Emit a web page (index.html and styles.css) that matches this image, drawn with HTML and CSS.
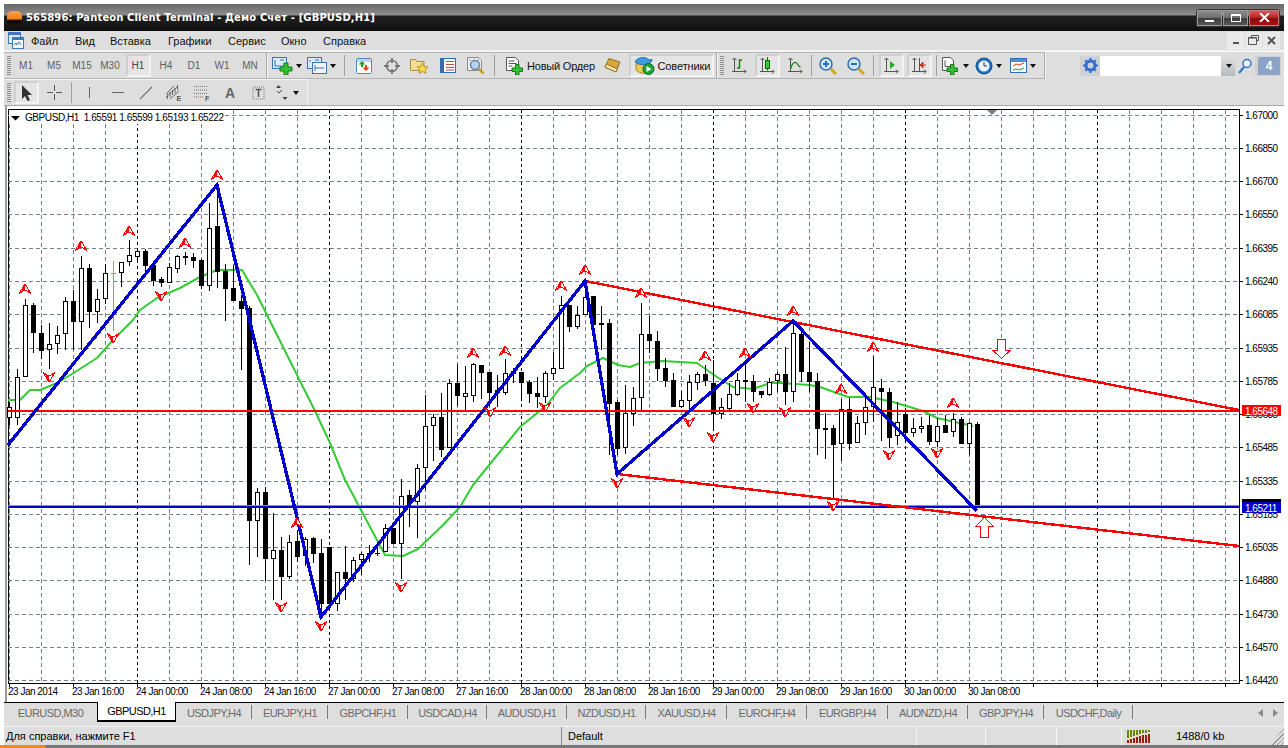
FILE: index.html
```html
<!DOCTYPE html>
<html lang="ru">
<head>
<meta charset="utf-8">
<title>565896: Panteon Client Terminal</title>
<link rel="stylesheet" href="styles.css">
</head>
<body>
<div class="window">
  <header class="titlebar">
    <span class="logo"></span>
    <span class="title-text">565896: Panteon Client Terminal - Демо Счет - [GBPUSD,H1]</span>
    <div class="winbtns">
      <span class="winbtn"><i class="glyph-min"></i></span>
      <span class="winbtn"><i class="glyph-max"></i></span>
      <span class="winbtn close">
        <svg width="11" height="9" viewBox="0 0 11 9"><path d="M1 0L10 9M10 0L1 9" stroke="#fff" stroke-width="2"/></svg>
      </span>
    </div>
  </header>

  <nav class="menubar">
    <svg class="appicon" width="16" height="17" viewBox="0 0 16 17"><rect x=".5" y=".5" width="12" height="11" fill="#dbe9f8" stroke="#3f77bf"/><rect x="4.5" y="5.5" width="11" height="11" fill="#f4f8fd" stroke="#3f77bf"/><path d="M1 2h11M5 7h10" stroke="#3f77bf" stroke-width="2"/><path d="M6 13l2-2 1 2 2-3 2 3" fill="none" stroke="#3f77bf"/></svg>
    <span class="menu-item m1">Файл</span>
    <span class="menu-item m2">Вид</span>
    <span class="menu-item m3">Вставка</span>
    <span class="menu-item m4">Графики</span>
    <span class="menu-item m5">Сервис</span>
    <span class="menu-item m6">Окно</span>
    <span class="menu-item m7">Справка</span>
    <div class="docbtns">
      <span class="docbtn"><i class="doc-min"></i></span>
      <span class="docbtn"><svg width="11" height="10" viewBox="0 0 11 10"><path d="M3.5 2.5v-2h7v5h-2M.5 2.5h8v7h-8z" fill="none" stroke="#555"/><path d="M1 3h7" stroke="#555"/></svg></span>
      <span class="docbtn"><svg width="9" height="9" viewBox="0 0 9 9"><path d="M1 1l7 7M8 1l-7 7" stroke="#555" stroke-width="2"/></svg></span>
    </div>
  </nav>

  <div class="tbrow first">
    <div class="tbgroup g-periods">
      <span class="grip"></span>
      <span class="btn per">M1</span><span class="btn per">M5</span><span class="btn per">M15</span><span class="btn per">M30</span><span class="btn per sel">H1</span><span class="btn per">H4</span><span class="btn per">D1</span><span class="btn per">W1</span><span class="btn per">MN</span>
    </div>
    <div class="tbgroup g-main">
      <span class="btn w34">
        <svg width="21" height="18" viewBox="0 0 21 18"><rect x=".5" y=".5" width="14" height="11" fill="#dcebfb" stroke="#3a72b8"/><path d="M3 3v6M3 9h9M8 3h4" stroke="#3a72b8"/><path d="M8 10h4V6h4v4h4v4h-4v4h-4v-4H8z" fill="#35c135" stroke="#0c7d0c"/></svg><i class="caret"></i>
      </span>
      <span class="btn w35">
        <svg width="20" height="18" viewBox="0 0 20 18"><rect x=".5" y=".5" width="14" height="11" fill="#dcebfb" stroke="#3a72b8"/><rect x="5.5" y="5.5" width="14" height="11" fill="#eef5fd" stroke="#3a72b8"/><path d="M3 3v2M8 8v6M8 11h9M8 3h4" stroke="#3a72b8"/></svg><i class="caret"></i>
      </span>
      <span class="sep s11"></span>
      <span class="btn">
        <svg width="16" height="16" viewBox="0 0 16 16"><rect x=".5" y=".5" width="15" height="15" rx="1" fill="#fff" stroke="#4b86c6"/><path d="M1 1h14v3H1z" fill="#bcd7f2"/><path d="M6 3L2.5 6.5H5V9h2V6.5h2.500z" fill="#1aa51a"/><path d="M10 13l3.500-3.500H11V7H9v2.500H6.500z" fill="#e0431f"/></svg>
      </span>
      <span class="btn">
        <svg width="16" height="16" viewBox="0 0 16 16"><circle cx="8" cy="8" r="5.500" fill="none" stroke="#777" stroke-width="1.500"/><path d="M8 0v5M8 11v5M0 8h5M11 8h5" stroke="#666" stroke-width="1.500"/></svg>
      </span>
      <span class="btn">
        <svg width="19" height="17" viewBox="0 0 19 17"><path d="M.5 2.500h5l1.500 2h7v9H.5z" fill="#f6dc8c" stroke="#a88f3f"/><path d="M12.500 6l1.700 3.500 3.800.5-2.800 2.600.7 3.800-3.400-1.900-3.400 1.900.7-3.800L7 10l3.800-.5z" fill="#f8d94a" stroke="#b89420"/></svg>
      </span>
      <span class="btn">
        <svg width="16" height="15" viewBox="0 0 16 15"><rect x=".5" y=".5" width="15" height="14" fill="#fff" stroke="#2f6db2"/><path d="M1 1h3v13H1z" fill="#2f6db2"/><path d="M6 3.500h8M6 6.500h8M6 9.500h8M6 12h8" stroke="#c54a3a"/></svg>
      </span>
      <span class="btn">
        <svg width="18" height="18" viewBox="0 0 18 18"><path d="M.5.500h11l3 3v10H.5z" fill="#eef0f2" stroke="#8c8c8c"/><circle cx="8" cy="8" r="4.500" fill="#b6d4ee" stroke="#6d87a0" stroke-width="1.500"/><path d="M11.500 11.500l5 5" stroke="#c8a020" stroke-width="2.500"/><path d="M3 2v2M7 2v2M11 2v2" stroke="#888"/></svg>
      </span>
      <span class="sep s9"></span>
      <span class="btn neworder">
        <svg class="noicon" width="17" height="18" viewBox="0 0 17 18"><path d="M.5.500h9l3 3v10H.5z" fill="#fff" stroke="#555"/><path d="M2.500 4h6M2.500 6.500h8M2.500 9h4" stroke="#555"/><path d="M6 11h3.500V7.500h3.500V11H16.500v3.500H13V18H9.500v-3.500H6z" fill="#35c135" stroke="#0c7d0c"/></svg>
        <span class="btn-label">Новый Ордер</span>
      </span>
      <span class="btn wbook">
        <svg width="17" height="15" viewBox="0 0 17 15"><path d="M5 .5l11 3.500-4 9.500L1 9z" fill="#d9a83a" stroke="#8b6a1e"/><path d="M1.500 9.500l10.500 4.500 1.500-3L3.500 6.500" fill="#fbe6a6" stroke="#8b6a1e"/></svg>
      </span>
      <span class="btn experts sel">
        <svg width="21" height="19" viewBox="0 0 21 19"><path d="M2 8c5-1 10-1 13 0v8c-3 2-9 2-13-2z" fill="#ecc94e" stroke="#a88a20"/><path d="M1 6c2-5 11-6 14-2l3-.5c0 2-2 4-4 4.500-4 1-10 1-13-2z" fill="#3f9adf" stroke="#2a6fae"/><circle cx="14.500" cy="13" r="5.500" fill="#17a43a" stroke="#0c6d23"/><path d="M12.500 10l5 3-5 3z" fill="#fff"/></svg>
        <span class="btn-label">Советники</span>
      </span>
    </div>
    <div class="tbgroup g-chart">
      <span class="grip tall"></span>
      <span class="btn"><svg width="16" height="17" viewBox="0 0 16 17"><path d="M3.500 1v14M1 14.500h14M1.500 3l2-2 2 2M13 12.500l2 2-2 2" fill="none" stroke="#555"/><path d="M6 11h2.500V3H11" fill="none" stroke="#0a8a0a" stroke-width="1.500"/></svg></span>
      <span class="btn sel"><svg width="16" height="17" viewBox="0 0 16 17"><path d="M3.500 1v14M1 14.500h14M1.500 3l2-2 2 2M13 12.500l2 2-2 2" fill="none" stroke="#555"/><rect x="6.500" y="3.500" width="4" height="8" fill="#2ecc2e" stroke="#0a6a0a"/><path d="M8.500 0v3.500M8.500 11.500v2" stroke="#0a6a0a"/></svg></span>
      <span class="btn"><svg width="16" height="17" viewBox="0 0 16 17"><path d="M3.500 1v14M1 14.500h14M1.500 3l2-2 2 2M13 12.500l2 2-2 2" fill="none" stroke="#555"/><path d="M3.500 12c2-7 5-8 7-5 1 2 2 3 3 3" fill="none" stroke="#0a8a0a" stroke-width="1.300"/></svg></span>
      <span class="sep s5"></span>
      <span class="btn"><svg width="18" height="18" viewBox="0 0 18 18"><circle cx="7" cy="7" r="6" fill="#cfe6fa" stroke="#2f6db2" stroke-width="1.500"/><path d="M4 7h6M7 4v6" stroke="#2f6db2" stroke-width="2"/><path d="M11.500 11.500l5.500 5.500" stroke="#d3a820" stroke-width="3"/></svg></span>
      <span class="btn"><svg width="18" height="18" viewBox="0 0 18 18"><circle cx="7" cy="7" r="6" fill="#cfe6fa" stroke="#2f6db2" stroke-width="1.500"/><path d="M4 7h6" stroke="#2f6db2" stroke-width="2"/><path d="M11.500 11.500l5.500 5.500" stroke="#d3a820" stroke-width="3"/></svg></span>
      <span class="sep s7"></span>
      <span class="btn sel"><svg width="16" height="17" viewBox="0 0 16 17"><path d="M3.500 1v14M1 14.500h14M1.500 3l2-2 2 2M13 12.500l2 2-2 2" fill="none" stroke="#555"/><path d="M7 4l5 4-5 4z" fill="#1fae1f"/></svg></span>
      <span class="btn sel"><svg width="16" height="17" viewBox="0 0 16 17"><path d="M3.500 1v14M1 14.500h14M1.500 3l2-2 2 2M13 12.500l2 2-2 2M8.500 1v13" fill="none" stroke="#555"/><path d="M15 8h-3M12 5l-3 3 3 3z" fill="#c8381a" stroke="#c8381a"/></svg></span>
      <span class="sep s6"></span>
      <span class="btn w32">
        <svg width="18" height="18" viewBox="0 0 18 18"><path d="M.5.500h8l3 3v10H.5z" fill="#fff" stroke="#555"/><path d="M3 3.500v6M3 9.500h6" stroke="#555"/><path d="M5 11h3.500V7.500H12V11h3.500v3.500H12V18H8.500v-3.500H5z" fill="#35c135" stroke="#0c7d0c"/></svg><i class="caret"></i>
      </span>
      <span class="btn w34">
        <svg width="18" height="18" viewBox="0 0 18 18"><circle cx="9" cy="9" r="8" fill="#1f6fc4" stroke="#14508f"/><circle cx="9" cy="9" r="5.500" fill="#eef6fd"/><path d="M9 5v4h3" fill="none" stroke="#333"/></svg><i class="caret"></i>
      </span>
      <span class="btn w36">
        <svg width="17" height="15" viewBox="0 0 17 15"><rect x=".5" y=".5" width="16" height="14" fill="#f7fbff" stroke="#2f6db2"/><path d="M1 1h15v3H1z" fill="#4b8fd6"/><path d="M3 8l3-2 3 1 5-2" fill="none" stroke="#cc3a2a"/><path d="M3 12l3-1 3 1 5-2" fill="none" stroke="#1e9e1e"/></svg><i class="caret"></i>
      </span>
    </div>
    <div class="searchbox">
      <span class="gear"><svg width="15" height="15" viewBox="0 0 15 15"><circle cx="7.500" cy="7.500" r="4.500" fill="none" stroke="#2f6fd0" stroke-width="3"/><path d="M7.500 0v3M7.500 12v3M0 7.500h3M12 7.500h3M2.200 2.200l2 2M10.800 10.800l2 2M2.200 12.800l2-2M10.800 4.200l2-2" stroke="#2f6fd0" stroke-width="2"/></svg></span>
      <span class="search-input"></span>
      <span class="search-drop"><i class="caret"></i></span>
      <span class="search-go"><svg width="14" height="16" viewBox="0 0 14 16"><circle cx="9" cy="5.500" r="4" fill="#eef6fd" stroke="#2f6fd0" stroke-width="1.500"/><path d="M6 9l-5 6" stroke="#2f6fd0" stroke-width="2"/></svg></span>
      <span class="search-msg">4</span>
    </div>
  </div>

  <div class="tbrow second">
    <div class="tbgroup g-draw">
      <span class="grip"></span>
      <span class="btn tool sel"><svg width="11" height="16" viewBox="0 0 11 16"><path d="M1 0v14l3-3 2.500 5 2.500-1-2.500-5H11z" fill="#333"/></svg></span>
      <span class="btn tool"><svg width="15" height="15" viewBox="0 0 15 15"><path d="M7.500 0v6M7.500 9v6M0 7.500h6M9 7.500h6" stroke="#555"/></svg></span>
      <span class="sep narrow"></span>
      <span class="btn tool v"><i class="draw-v"></i></span>
      <span class="btn tool h"><i class="draw-h"></i></span>
      <span class="btn tool"><svg width="14" height="14" viewBox="0 0 14 14"><path d="M1 13L13 1" stroke="#777" stroke-width="1.200"/></svg></span>
      <span class="btn tool"><svg width="19" height="16" viewBox="0 0 19 16"><path d="M1 12L12 2M2.500 9v5M5 7v5M7.500 5v5M10 3v5M12.500 0v5M1 9L9 1M5 14L14 6" fill="none" stroke="#666"/><text class="ic-letter" x="11.500" y="15.500">E</text></svg></span>
      <span class="btn tool"><svg width="19" height="16" viewBox="0 0 19 16"><path d="M1 1.500h13M1 5h13M1 8.500h13M1 12h9" stroke="#777" stroke-dasharray="1 1"/><text class="ic-letter" x="12" y="15.500">F</text></svg></span>
      <span class="btn tool letter">A</span>
      <span class="btn tool"><svg width="13" height="14" viewBox="0 0 13 14"><path d="M1 1h11v12H1z" fill="none" stroke="#777" stroke-dasharray="1 1"/><path d="M3.500 3.500h6M6.500 3.500V11" stroke="#555" stroke-width="1.500"/></svg></span>
      <span class="btn tool wide"><svg width="14" height="15" viewBox="0 0 14 15"><path d="M2.500 0L5 3H0zM9 15l-2.500-3h5z" fill="#444"/><path d="M1 6l2 2 3-3" fill="none" stroke="#444"/></svg><i class="caret"></i></span>
    </div>
  </div>

  <svg class="chart" width="1280" height="596" viewBox="4 106 1280 596">
    <defs>
      <g id="fu"><path d="M0-5L6 4.500 0 1-6 4.500z" fill="#fff" stroke="#f00"/><path d="M0-4L-4.500 3.500 0 .5z" fill="#f00"/></g>
      <g id="fd"><path d="M0 5L6-4.500 0-1-6-4.500z" fill="#fff" stroke="#f00"/><path d="M0 4L-4.500-3.500 0-.5z" fill="#f00"/></g>
    </defs>
    <rect class="edge" x="5" y="106" width="2" height="596"/>
    <rect class="plot" x="8.500" y="109.500" width="1231" height="574"/>
    <path class="grid" d="M8 115.500H1239M8 148.500H1239M8 181.500H1239M8 214.500H1239M8 248.500H1239M8 281.500H1239M8 314.500H1239M8 348.500H1239M8 381.500H1239M8 414.500H1239M8 447.500H1239M8 481.500H1239M8 514.500H1239M8 547.500H1239M8 580.500H1239M8 614.500H1239M8 647.500H1239M8 680.500H1239
    M9.500 110V683M41.500 110V683M73.500 110V683M105.500 110V683M169.500 110V683M201.500 110V683M233.500 110V683M265.500 110V683M297.500 110V683M361.500 110V683M393.500 110V683M425.500 110V683M457.500 110V683M489.500 110V683M553.500 110V683M585.500 110V683M617.500 110V683M649.500 110V683M681.500 110V683M745.500 110V683M777.500 110V683M809.500 110V683M841.500 110V683M873.500 110V683M937.500 110V683M969.500 110V683M1001.500 110V683M1033.500 110V683M1065.500 110V683M1129.500 110V683M1161.500 110V683M1193.500 110V683M1225.500 110V683"/>
    <path class="grid-day" d="M137.500 110V683M329.500 110V683M521.500 110V683M713.500 110V683M905.500 110V683M1097.500 110V683"/>
    <path class="ticks" d="M1239 115.500h4M1239 148.500h4M1239 181.500h4M1239 214.500h4M1239 248.500h4M1239 281.500h4M1239 314.500h4M1239 348.500h4M1239 381.500h4M1239 414.500h4M1239 447.500h4M1239 481.500h4M1239 514.500h4M1239 547.500h4M1239 580.500h4M1239 614.500h4M1239 647.500h4M1239 680.500h4
    M9.500 684v3M73.500 684v3M137.500 684v3M201.500 684v3M265.500 684v3M329.500 684v3M393.500 684v3M457.500 684v3M521.500 684v3M585.500 684v3M649.500 684v3M713.500 684v3M777.500 684v3M841.500 684v3M905.500 684v3M969.500 684v3M1033.500 684v3M1097.500 684v3M1161.500 684v3M1225.500 684v3"/>

    <polyline class="ma" points="8,400 20,400 30,390 40,390 57,383 72,374 97,358 113,340 133,320 140,310 157,298 180,288 200,277 217,270 242,270 257,295 283,347 315,411 330,443 345,480 377,540 385,555 403,556 418,549 443,525 460,507 473,485 520,427 547,405 560,388 580,373 587,366 603,358 618,365 630,367 640,363 663,361 697,363 717,377 733,387 753,389 770,383 780,383 810,385 820,387 848,397 870,397 893,402 923,411 937,418 973,426"/>

    <path class="wick" d="M9.500 402V425M17.500 369V425M25.500 299V377M49.500 323V369M57.500 326V354M65.500 297V350M81.500 256V350M97.500 289V323M105.500 264V304M121.500 262V287M129.500 240V266M137.500 249V262M169.500 263V283M177.500 255V273M209.500 203V291M257.500 488V557M273.500 513V600M289.500 535V579M305.500 537V566M337.500 572V611M353.500 557V582M361.500 552V575M369.500 545V562M385.500 524V552M401.500 479V579M417.500 464V538M425.500 395V490M433.500 414V461M449.500 379V448M465.500 366V412M473.500 363V402M505.500 359V395M513.500 368V383M545.500 371V403M553.500 352V380M561.500 296V369M577.500 306V329M585.500 280V315M625.500 385V454M633.500 387V426M641.500 303V411M681.500 391V408M689.500 375V410M697.500 372V390M721.500 398V419M729.500 383V411M737.500 373V396M769.500 378V396M777.500 372V392M793.500 322V402M841.500 399V461M857.500 416V443M865.500 398V435M873.500 356V422M897.500 402V445M913.500 418V437M921.500 417V433M937.500 418V447M953.500 413V437M969.500 422V455
    M33.500 303V353M41.500 325V359M73.500 290V350M89.500 264V328M145.500 249V271M153.500 261V286M161.500 277V287M185.500 252V265M193.500 253V268M201.500 259V289M217.500 185V288M225.500 264V321M233.500 265V301M241.500 295V370M249.500 306V565M265.500 487V581M281.500 537V600M297.500 530V562M313.500 537V563M321.500 539V617M329.500 547V604M345.500 546V600M377.500 542V556M393.500 528V544M409.500 490V527M441.500 393V457M457.500 364V406M481.500 365V399M489.500 372V407M497.500 375V407M521.500 372V398M529.500 380V403M537.500 377V408M569.500 305V332M593.500 296V340M601.500 306V350M609.500 319V455M617.500 400V455M649.500 316V353M657.500 331V381M665.500 358V387M673.500 373V407M705.500 365V386M713.500 360V430M745.500 364V402M753.500 375V402M761.500 391V398M785.500 347V405M801.500 331V382M809.500 342V392M817.500 373V455M825.500 413V459M833.500 425V500M849.500 398V450M881.500 379V441M889.500 388V448M905.500 408V441M929.500 415V445M945.500 415V433M961.500 417V444M977.500 422V506"/>
    <path class="doji" d="M113.500 261V331M111 273.500h5"/>
    <path class="tick-black" d="M375 553.500h5"/>
    <path class="bear" d="M31 305h5v28h-5zM39 333h5v18h-5zM71 301h5v21h-5zM87 268h5v44h-5zM143 251h5v15h-5zM151 265h5v16h-5zM159 279h5v4h-5zM183 256h5v2h-5zM191 257h5v4h-5zM199 260h5v26h-5zM215 226h5v46h-5zM223 271h5v18h-5zM231 288h5v13h-5zM239 301h5v8h-5zM247 308h5v213h-5zM263 492h5v67h-5zM279 550h5v27h-5zM295 541h5v16h-5zM311 538h5v16h-5zM319 553h5v51h-5zM327 547h5v57h-5zM343 572h5v7h-5zM391 528h5v16h-5zM407 495h5v9h-5zM439 417h5v33h-5zM455 383h5v13h-5zM479 365h5v8h-5zM487 372h5v21h-5zM495 390h5v3h-5zM519 372h5v11h-5zM527 382h5v12h-5zM535 393h5v4h-5zM567 305h5v22h-5zM591 296h5v29h-5zM599 323h5v2h-5zM607 323h5v81h-5zM615 402h5v47h-5zM647 334h5v7h-5zM655 341h5v28h-5zM663 368h5v13h-5zM671 380h5v27h-5zM703 374h5v7h-5zM711 383h5v31h-5zM743 380h5v2h-5zM751 381h5v11h-5zM759 391h5v4h-5zM783 374h5v18h-5zM799 334h5v38h-5zM807 372h5v10h-5zM815 381h5v48h-5zM823 428h5v2h-5zM831 428h5v17h-5zM847 409h5v35h-5zM879 388h5v4h-5zM887 392h5v46h-5zM903 414h5v19h-5zM927 425h5v17h-5zM943 425h5v8h-5zM959 419h5v25h-5zM975 424h5v82h-5z"/>
    <path class="bull" d="M7.500 407.500h4v10h-4zM15.500 377.500h4v40h-4zM23.500 305.500h4v71h-4zM47.500 344.500h4v5h-4zM55.500 335.500h4v8h-4zM63.500 301.500h4v32h-4zM79.500 268.500h4v53h-4zM95.500 299.500h4v12h-4zM103.500 273.500h4v25h-4zM119.500 262.500h4v10h-4zM127.500 255.500h4v6h-4zM135.500 251.500h4v5h-4zM167.500 267.500h4v15h-4zM175.500 256.500h4v12h-4zM207.500 228.500h4v57h-4zM255.500 492.500h4v28h-4zM271.500 550.500h4v8h-4zM287.500 542.500h4v34h-4zM303.500 539.500h4v16h-4zM335.500 572.500h4v31h-4zM351.500 560.500h4v18h-4zM359.500 554.500h4v5h-4zM367.500 553.500h4v1h-4zM383.500 528.500h4v23h-4zM399.500 496.500h4v47h-4zM415.500 468.500h4v33h-4zM423.500 426.500h4v41h-4zM431.500 417.500h4v8h-4zM447.500 383.500h4v64h-4zM463.500 393.500h4v3h-4zM471.500 364.500h4v31h-4zM503.500 373.500h4v19h-4zM511.500 371.500h4v2h-4zM543.500 373.500h4v23h-4zM551.500 368.500h4v5h-4zM559.500 305.500h4v63h-4zM575.500 315.500h4v11h-4zM583.500 297.500h4v17h-4zM623.500 413.500h4v34h-4zM631.500 398.500h4v15h-4zM639.500 334.500h4v63h-4zM679.500 400.500h4v6h-4zM687.500 382.500h4v18h-4zM695.500 374.500h4v8h-4zM719.500 407.500h4v6h-4zM727.500 394.500h4v14h-4zM735.500 380.500h4v14h-4zM767.500 382.500h4v12h-4zM775.500 374.500h4v6h-4zM791.500 333.500h4v58h-4zM839.500 409.500h4v34h-4zM855.500 423.500h4v19h-4zM863.500 407.500h4v15h-4zM871.500 387.500h4v19h-4zM895.500 422.500h4v13h-4zM911.500 428.500h4v4h-4zM919.500 426.500h4v2h-4zM935.500 426.500h4v15h-4zM951.500 419.500h4v12h-4zM967.500 423.500h4v20h-4z"/>

    <path class="hline-grey" d="M8 505.500H1239"/>
    <path class="hline-blue" d="M8 507H1239"/>
    <path class="trend-red" d="M8 411H1239M585 281L1239 410M617 474L1239 546"/>
    <polyline class="zigzag" points="8,445 217,185 321,617 585,281 617,474 793,321 977,511"/>

    <path class="big-arrow" d="M997.500 339.500h8v11h4.500l-8.500 8-8.500-8h4.500z"/>
    <path class="big-arrow" d="M984.500 517.500l8.500 8.500h-4.500v11h-8v-11H976z"/>
    <path class="shift" d="M987 110h10l-5 5z"/>

    <g class="markers">
      <use href="#fu" x="25" y="289"/><use href="#fu" x="81" y="246"/><use href="#fu" x="129" y="231"/><use href="#fu" x="185" y="243"/><use href="#fu" x="217" y="175"/><use href="#fu" x="297" y="523"/><use href="#fu" x="473" y="353"/><use href="#fu" x="505" y="351"/><use href="#fu" x="561" y="286"/><use href="#fu" x="585" y="270"/><use href="#fu" x="641" y="293"/><use href="#fu" x="705" y="356"/><use href="#fu" x="745" y="353"/><use href="#fu" x="793" y="311"/><use href="#fu" x="841" y="389"/><use href="#fu" x="873" y="347"/><use href="#fu" x="953" y="403"/>
      <use href="#fd" x="49" y="377"/><use href="#fd" x="113" y="338"/><use href="#fd" x="161" y="296"/><use href="#fd" x="281" y="607"/><use href="#fd" x="321" y="626"/><use href="#fd" x="401" y="587"/><use href="#fd" x="490" y="412"/><use href="#fd" x="545" y="407"/><use href="#fd" x="617" y="483"/><use href="#fd" x="689" y="422"/><use href="#fd" x="713" y="437"/><use href="#fd" x="753" y="408"/><use href="#fd" x="785" y="412"/><use href="#fd" x="833" y="506"/><use href="#fd" x="889" y="455"/><use href="#fd" x="937" y="453"/>
    </g>

    <rect class="legend-bg" x="9" y="110" width="215" height="14"/>
    <path class="legend-tri" d="M11 116h9l-4.500 4.500z"/>
    <text class="lbl legend" x="25" y="121">GBPUSD,H1  1.65591 1.65599 1.65193 1.65222</text>

    <g class="lbl">
      <text x="1245" y="119">1.67000</text><text x="1245" y="152">1.66850</text><text x="1245" y="185">1.66700</text><text x="1245" y="218">1.66550</text><text x="1245" y="252">1.66395</text><text x="1245" y="285">1.66240</text><text x="1245" y="318">1.66085</text><text x="1245" y="352">1.65935</text><text x="1245" y="385">1.65785</text><text x="1245" y="418">1.65635</text><text x="1245" y="451">1.65485</text><text x="1245" y="485">1.65335</text><text x="1245" y="518">1.65185</text><text x="1245" y="551">1.65035</text><text x="1245" y="584">1.64880</text><text x="1245" y="618">1.64730</text><text x="1245" y="651">1.64570</text><text x="1245" y="684">1.64420</text>
    </g>
    <rect class="tag-red" x="1242" y="405" width="39" height="11"/>
    <text class="lbl tag" x="1245" y="415">1.65648</text>
    <rect class="tag-black" x="1242" y="499" width="39" height="3"/>
    <rect class="tag-blue" x="1242" y="502" width="39" height="11"/>
    <text class="lbl tag" x="1245" y="512">1.65211</text>

    <g class="lbl">
      <text x="8" y="695">23 Jan 2014</text><text x="72" y="695">23 Jan 16:00</text><text x="136" y="695">24 Jan 00:00</text><text x="200" y="695">24 Jan 08:00</text><text x="264" y="695">24 Jan 16:00</text><text x="328" y="695">27 Jan 00:00</text><text x="392" y="695">27 Jan 08:00</text><text x="456" y="695">27 Jan 16:00</text><text x="520" y="695">28 Jan 00:00</text><text x="584" y="695">28 Jan 08:00</text><text x="648" y="695">28 Jan 16:00</text><text x="712" y="695">29 Jan 00:00</text><text x="776" y="695">29 Jan 08:00</text><text x="840" y="695">29 Jan 16:00</text><text x="904" y="695">30 Jan 00:00</text><text x="968" y="695">30 Jan 08:00</text>
    </g>
  </svg>

  <div class="tabs">
    <span class="tab">EURUSD,M30</span>
    <span class="tab active">GBPUSD,H1</span>
    <span class="tab">USDJPY,H4</span>
    <span class="tab">EURJPY,H1</span>
    <span class="tab">GBPCHF,H1</span>
    <span class="tab">USDCAD,H4</span>
    <span class="tab">AUDUSD,H1</span>
    <span class="tab">NZDUSD,H1</span>
    <span class="tab">XAUUSD,H4</span>
    <span class="tab">EURCHF,H4</span>
    <span class="tab">EURGBP,H4</span>
    <span class="tab">AUDNZD,H4</span>
    <span class="tab">GBPJPY,H4</span>
    <span class="tab">USDCHF,Daily</span>
    <span class="tab-nav"><i class="tri-l"></i><i class="tri-r"></i></span>
  </div>

  <footer class="statusbar">
    <span class="cell help">Для справки, нажмите F1</span>
    <span class="cell">Default</span>
    <span class="cell"></span>
    <span class="cell"></span>
    <span class="cell"></span>
    <span class="cell conn">
      <svg width="24" height="13" viewBox="0 0 24 13"><path d="M1 0v8M4 0v7M7 0v6M10 0v5M13 0v4M16 0v3M19 0v3M22 0v2" stroke="#6b8a00" stroke-width="2"/><path d="M1 10v3M4 9v4M7 8v5M10 7v6M13 6v7M16 5v8M19 5v8M22 4v9" stroke="#a01c08" stroke-width="2"/></svg>
      <span class="kb">1488/0 kb</span>
    </span>
    <span class="resize"></span>
  </footer>
</div>
<div class="taskbar"></div>
</body>
</html>
```
FILE: styles.css
```css
* { box-sizing: border-box; }
html, body { margin: 0; padding: 0; height: 100%; overflow: hidden; background: #fff; }
body { font-family: "Liberation Sans", Arial, sans-serif; font-size: 11px; color: #000; padding-top: 4px; position: relative; }
.window { width: 1280px; margin-left: 4px; display: flex; flex-direction: column; height: 741px; background: #dedede; }

.titlebar { height: 27px; display: flex; align-items: center; padding-left: 3px; background: linear-gradient(#666 0, #8e8e8e 11px, #1f1f1f 12px, #191919 20px, #0f0f0f 27px); }
.logo { width: 15px; height: 14px; border-radius: 5px; margin-right: 4px; background: linear-gradient(#f7a548 0, #f47f1a 55%, #000 70%, #2a1402 100%); }
.title-text { font-family: "DejaVu Sans", sans-serif; font-weight: bold; font-size: 10px; letter-spacing: .12px; color: #fff; white-space: nowrap; }
.winbtns { margin-left: auto; margin-right: 5px; display: flex; height: 16px; gap: 1px; padding: 0; box-shadow: 0 0 0 1px #333; border-radius: 2px; }
.winbtn { width: 25px; display: flex; align-items: center; justify-content: center; background: linear-gradient(#8b8b8b, #6d6d6d 50%, #3d3d3d 51%, #555); border: 1px solid #9a9a9a; }
.winbtn.close { width: 30px; background: linear-gradient(#d35a5a, #b72020 50%, #8a0a0a 51%, #a51515); border-color: #c97777; }
.glyph-min { width: 9px; height: 2px; background: #fff; margin-top: 7px; }
.glyph-max { width: 10px; height: 8px; border: 1px solid #fff; border-top-width: 2px; }

.menubar { height: 19px; display: flex; align-items: center; padding-left: 4px; background: #dedede; position: relative; }
.appicon { flex: none; }
.menu-item { font-size: 11px; white-space: nowrap; color: #111; }
.m1 { margin-left: 7px; width: 44px; }
.m2 { width: 35px; }
.m3 { width: 58px; }
.m4 { width: 60px; }
.m5 { width: 53px; }
.m6 { width: 42px; }
.m7 { width: 60px; }
.docbtns { margin-left: auto; display: flex; height: 17px; }
.docbtn { width: 17px; margin-left: 1px; height: 17px; background: #e9e9e9; border-bottom: 1px solid #f5f5f5; display: flex; align-items: center; justify-content: center; }
.doc-min { width: 6px; height: 2px; background: #555; margin-top: 5px; }
.docbtns .docbtn:last-child { margin-right: 4px; }

.tbrow { display: flex; align-items: stretch; background: #dedede; }
.tbrow.first { height: 29px; border-top: 2px solid #f4f4f4; }
.tbrow.second { height: 27px; border-bottom: 1px solid #a8a8a8; }
.tbgroup { display: flex; align-items: center; border-top: 1px solid #b4b4b4; border-bottom: 1px solid #b4b4b4; border-right: 1px solid #aaa; box-shadow: 1px 0 0 #f4f4f4; }
.tbrow.second .tbgroup { border-top: 1px solid #f4f4f4; border-bottom: 0; border-right: 1px solid #f4f4f4; box-shadow: -1px 0 0 #dedede inset; }
.g-periods { width: 263px; padding-left: 3px; }
.g-main { width: 450px; }
.g-chart { width: 328px; }
.g-draw { width: 304px; padding-left: 3px; }
.grip { width: 5px; height: 20px; flex: none; background: repeating-linear-gradient(#8f8f8f 0 1px, #dedede 1px 2px); margin-right: 0; background-size: 4px 100%; background-repeat: no-repeat; }
.btn { width: 25px; height: 23px; margin: 0 1.5px; flex: none; display: flex; align-items: center; justify-content: center; gap: 2px; }
.btn.sel { background-color: #ededed; background-image: linear-gradient(45deg, #dcdcdc 25%, transparent 25%, transparent 75%, #dcdcdc 75%), linear-gradient(45deg, #dcdcdc 25%, transparent 25%, transparent 75%, #dcdcdc 75%); background-size: 2px 2px; background-position: 0 0, 1px 1px; border: 2px solid #f3f3f3; border-top-color: #cfcfcf; border-left-color: #cfcfcf; }
.per { font-size: 10px; color: #606060; }
.per.sel { color: #444; }
.w34 { width: 31px; }
.w35 { width: 32px; }
.w32 { width: 29px; }
.w36 { width: 33px; }
.caret { width: 0; height: 0; border-left: 3.500px solid transparent; border-right: 3.500px solid transparent; border-top: 4px solid #111; flex: none; margin-left: 1px; }
.sep { flex: none; height: 21px; display: block; background: linear-gradient(#a0a0a0, #a0a0a0) center / 1px 100% no-repeat; }
.s5 { width: 5px; }
.s6 { width: 6px; }
.s7 { width: 7px; }
.s9 { width: 9px; }
.s11 { width: 11px; }
.g-main .btn.w34 { margin-left: 4px; }
.neworder { width: 97px; justify-content: flex-start; padding-left: 6px; gap: 4px; }
.noicon { flex: none; }
.btn-label { font-size: 11px; white-space: nowrap; color: #111; }
.neworder .btn-label { letter-spacing: -.2px; }
.wbook { width: 24px; }
.experts { width: 85px; margin-left: 3px; margin-right: 0; justify-content: flex-start; padding-left: 3px; gap: 3px; }
.experts .btn-label { letter-spacing: -.1px; }
.g-chart .grip.tall { height: 20px; margin-left: 3px; }
.searchbox { margin-left: 35px; display: flex; align-self: center; height: 20px; width: 201px; background: #cfd1d4; }
.gear { width: 20px; display: flex; align-items: center; justify-content: center; }
.search-input { width: 121px; background: #fff; }
.search-drop { width: 14px; display: flex; align-items: center; justify-content: center; background: linear-gradient(#dfe0e2, #b9babc); }
.search-go { width: 20px; display: flex; align-items: center; justify-content: center; background: #dcdcdc; margin-right: 2px; }
.search-msg { flex: 1; background: #8ba3c6; color: #fff; font-weight: bold; font-size: 12px; text-align: center; line-height: 18px; margin: 1px; border-radius: 2px 2px 2px 0; }

.tool { width: 25px; }
.tool.v { margin-right: 2.500px; }
.tool.wide { width: 28px; }
.draw-v { width: 1px; height: 11px; background: #666; display: block; }
.draw-h { width: 12px; height: 1px; background: #666; display: block; }
.letter { font-size: 14px; font-weight: bold; color: #666; }
.ic-letter { font: bold 7px "Liberation Sans", sans-serif; fill: #555; }
.narrow { height: 21px; width: 7px; }

.chart { display: block; flex: none; background: #fff; }
.edge { fill: #9a9a9a; }
.plot { fill: #fff; stroke: #000; shape-rendering: crispEdges; }
.grid { fill: none; stroke: #708090; stroke-dasharray: 4 3; shape-rendering: crispEdges; }
.grid-day { fill: none; stroke: #000; stroke-dasharray: 3 3; shape-rendering: crispEdges; }
.ticks { fill: none; stroke: #000; shape-rendering: crispEdges; }
.ma { fill: none; stroke: #32cd32; stroke-width: 2; stroke-linejoin: round; }
.wick { fill: none; stroke: #000; shape-rendering: crispEdges; }
.doji { fill: none; stroke: #32e032; shape-rendering: crispEdges; }
.tick-black { fill: none; stroke: #000; shape-rendering: crispEdges; }
.bear { fill: #000; shape-rendering: crispEdges; }
.bull { fill: #fff; stroke: #000; shape-rendering: crispEdges; }
.hline-grey { stroke: #8a94a8; fill: none; shape-rendering: crispEdges; }
.hline-blue { stroke: #0000cd; stroke-width: 2; fill: none; shape-rendering: crispEdges; }
.trend-red { stroke: #f00; stroke-width: 2.400; fill: none; shape-rendering: crispEdges; }
.zigzag { stroke: #0000cd; stroke-width: 3.300; fill: none; stroke-linejoin: miter; shape-rendering: crispEdges; }
.big-arrow { fill: #fff; stroke: #f00; shape-rendering: crispEdges; }
.shift { fill: #708090; }
.markers { shape-rendering: crispEdges; }
.legend-bg { fill: #fff; }
.legend-tri { fill: #000; }
.lbl { font-family: "Liberation Sans", Arial, sans-serif; font-size: 10px; fill: #000; letter-spacing: -.5px; white-space: pre; }
.legend { letter-spacing: -.42px; }
.tag-red { fill: #f00; }
.tag-black { fill: #000; }
.tag-blue { fill: #0000cd; }
.lbl.tag { fill: #fff; }

.tabs { height: 22px; display: grid; grid-template-columns: 93px 79px 76px 76px 80px 79px 80px 79px 81px 80px 81px 80px 76px 89px 1fr; background: #dedede; border-top: 1px solid #000; flex: none; }
.tab { display: flex; align-items: center; justify-content: center; color: #6a6a6a; font-size: 11px; letter-spacing: -.55px; height: 19px; white-space: nowrap; position: relative; }
.tab + .tab::after { content: ""; position: absolute; right: 0; top: 2px; width: 1px; height: 14px; background: #777; }
.tab.active { background: #fff; color: #000; border-left: 1px solid #000; border-right: 1px solid #000; border-bottom: 2px solid #000; margin-top: -1px; height: 20px; }
.tab.active::after { display: none; }
.tab-nav { display: flex; justify-content: flex-end; align-items: center; gap: 10px; padding-right: 6px; height: 19px; }
.tri-l { border-right: 5px solid #8a8a8a; border-top: 4px solid transparent; border-bottom: 4px solid transparent; }
.tri-r { border-left: 5px solid #8a8a8a; border-top: 4px solid transparent; border-bottom: 4px solid transparent; }

.statusbar { height: 19px; display: grid; grid-template-columns: 558px 355px 69px 71px 65px 1fr 14px; margin-top: 2px; border-top: 1px solid #f0f0f0; background: #dedede; flex: none; align-items: stretch; }
.cell { display: flex; align-items: center; padding-left: 1px; border-right: 1px solid #f6f6f6; white-space: nowrap; font-size: 11px; }
.cell.help { padding-left: 2px; border-right: 1px solid #888; }
.cell:nth-child(2) { padding-left: 6px; }
.conn { border-right: 0; padding-left: 5px; }
.kb { margin-left: 25px; }
.resize { background: repeating-linear-gradient(135deg, #dedede 0 2px, #9c9c9c 2px 3px); clip-path: polygon(100% 0, 100% 100%, 0 100%); }

.taskbar { position: absolute; left: 0; right: 0; bottom: 0; height: 3px; background: linear-gradient(90deg, #f08a1c 0 45px, #777 46px, #777 100%); }
```
